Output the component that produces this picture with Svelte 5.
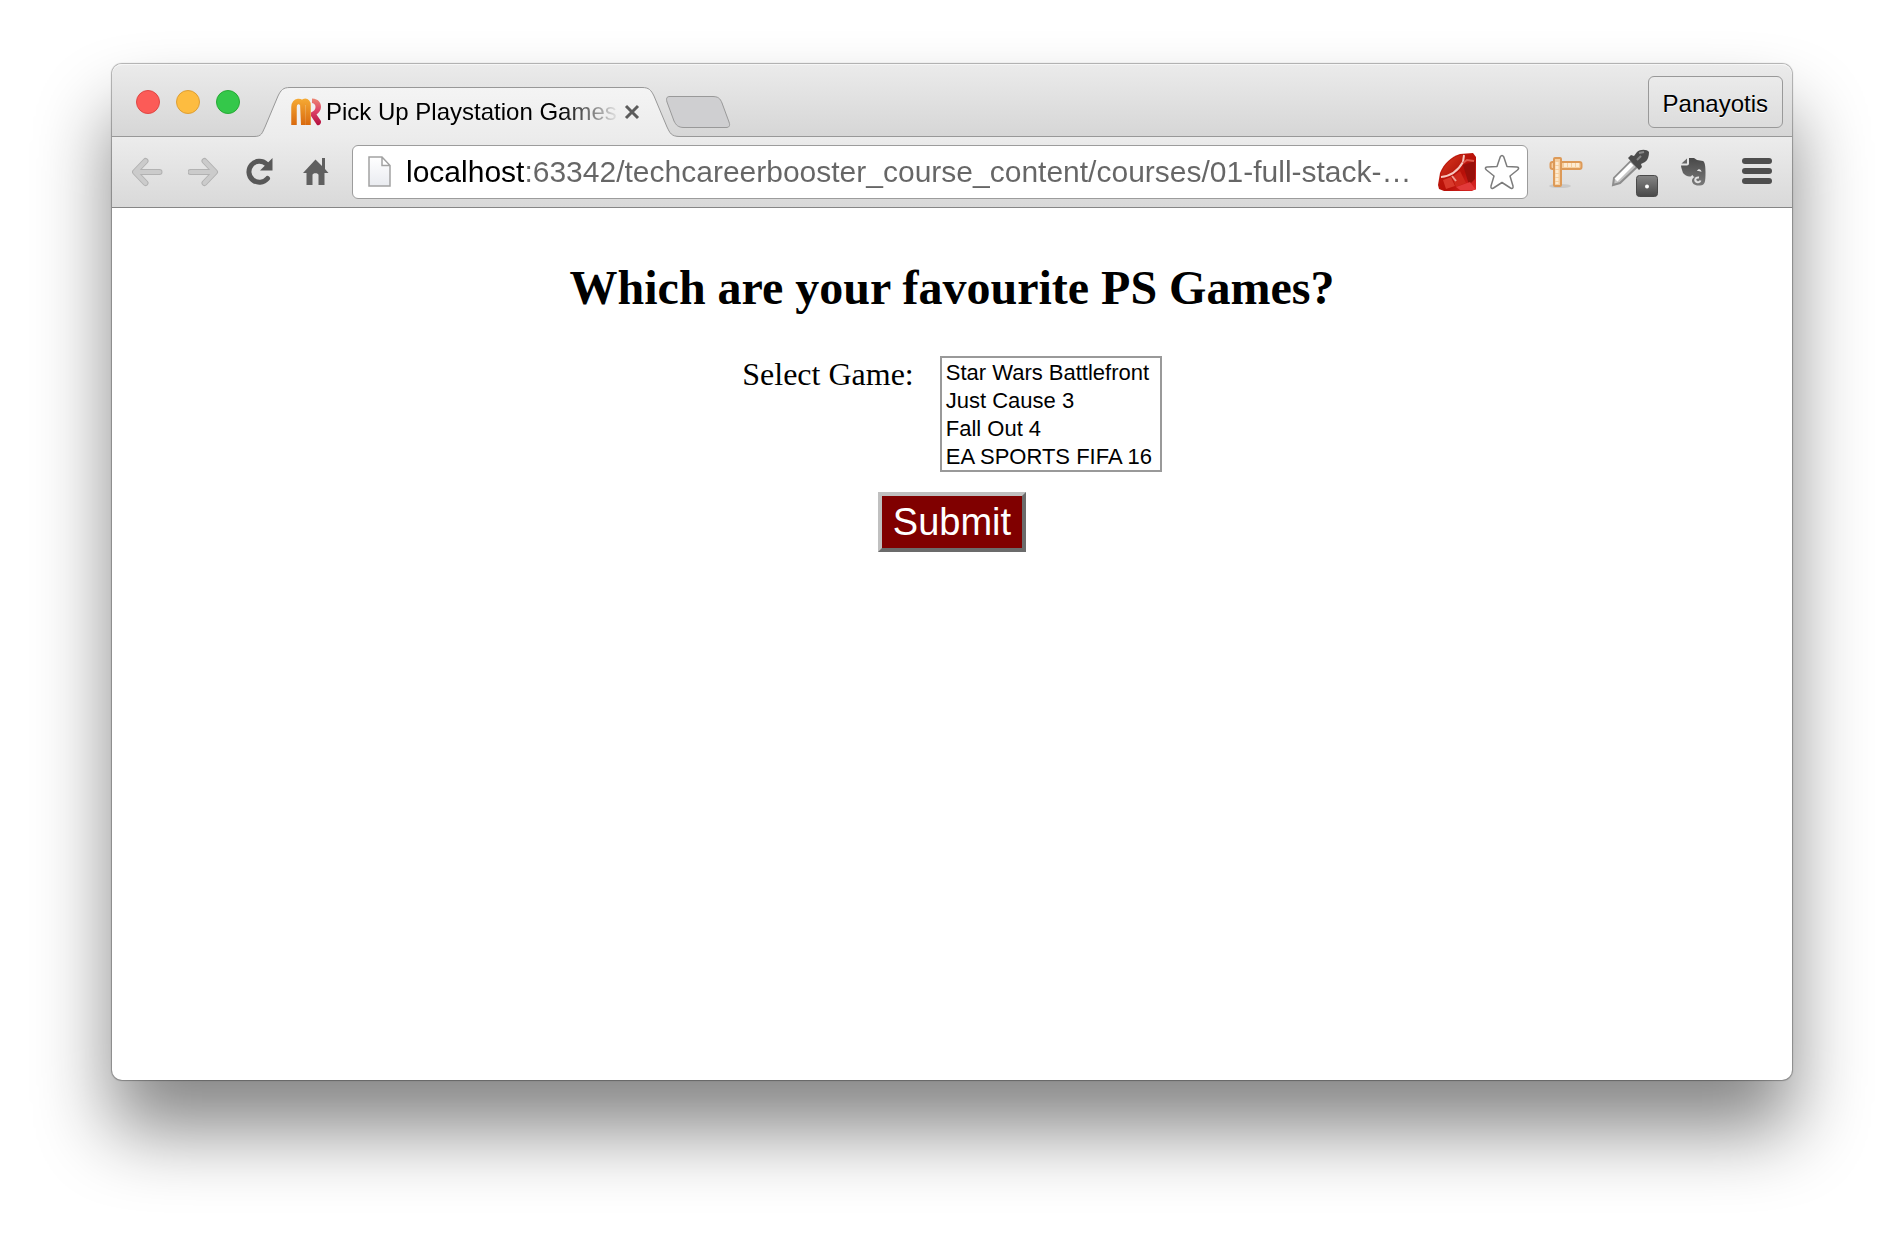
<script>
  const games = ['Star Wars Battlefront', 'Just Cause 3', 'Fall Out 4', 'EA SPORTS FIFA 16'];
  let url = $state('localhost:63342/techcareerbooster_course_content/courses/01-full-stack-…');
</script>

<div class="desktop">
  <div class="window">
    <header class="strip">
      <div class="lights">
        <button class="light red" aria-label="Close window"></button>
        <button class="light amber" aria-label="Minimise window"></button>
        <button class="light green" aria-label="Zoom window"></button>
      </div>

      <div class="tab">
        <svg class="tab-shape" viewBox="0 0 426 50" width="426" height="50" aria-hidden="true">
          <defs>
            <linearGradient id="tabFill" x1="0" y1="0" x2="0" y2="1">
              <stop offset="0" stop-color="#f4f4f4" />
              <stop offset="1" stop-color="#ececec" />
            </linearGradient>
          </defs>
          <path d="M0 49.5 C8 49.5 8 46 11 40 L24 9 C27 3 29 .5 36 .5 H388 C395 .5 397 3 400 9 L413 40 C416 46 417 49.5 426 49.5 V50 H0 Z" fill="url(#tabFill)" />
          <path d="M0 49.5 C8 49.5 8 46 11 40 L24 9 C27 3 29 .5 36 .5 H388 C395 .5 397 3 400 9 L413 40 C416 46 417 49.5 426 49.5" fill="none" stroke="#989898" />
        </svg>
        <div class="tab-body">
          <svg viewBox="0 0 32 30" width="32" height="30" aria-hidden="true">
            <defs>
              <linearGradient id="mFill" gradientUnits="userSpaceOnUse" x1="0" y1="1" x2="0" y2="28">
                <stop offset="0" stop-color="#f6ac35" />
                <stop offset="1" stop-color="#d9690e" />
              </linearGradient>
              <linearGradient id="rFill" gradientUnits="userSpaceOnUse" x1="0" y1="1" x2="0" y2="28">
                <stop offset="0" stop-color="#ee8a74" />
                <stop offset=".5" stop-color="#dc3f66" />
                <stop offset="1" stop-color="#b3103f" />
              </linearGradient>
            </defs>
            <path d="M4 28 V10 C4 3 12 3 12.500 8 C12.500 3 18 3 18 8 V28" fill="none" stroke="url(#mFill)" stroke-width="5.500" />
            <path d="M10 28 V10 C10 7 7 7 7 10 V28 Z" fill="#f0f0f0" />
            <path d="M10 6 L12.500 8 L15 6 L15.500 28 H11 Z" fill="url(#mFill)" />
            <path d="M22 1.500 C29 2 31 6 31 10 C31 13 29 16 26.500 17.500 L31 24 C31.500 27 29 29 27 28 L21 19 V15.500 C24.500 14 25.500 12 25.500 10 C25.500 8 24.500 6.500 22 6 Z" fill="url(#rFill)" />
          </svg>
          <span class="tab-title">Pick Up Playstation Games</span>
          <button class="plain" aria-label="Close tab">
            <svg viewBox="0 0 16 16" width="16" height="16" aria-hidden="true">
              <path d="M2 2 L14 14 M14 2 L2 14" stroke="#5c5c5c" stroke-width="3" />
            </svg>
          </button>
        </div>
      </div>

      <button class="plain new-tab" aria-label="New tab">
        <svg viewBox="0 0 66 34" width="66" height="34" aria-hidden="true">
          <path d="M5 1.500 H47 C53 1.500 55 3 57 8 L64 27 C65.500 31 64 32.500 61 32.500 H19 C13 32.500 11 30 9 26 L2 7 C1 3.500 1.500 1.500 5 1.500 Z" fill="#cfcfd1" stroke="#999" />
        </svg>
      </button>

      <button class="profile">Panayotis</button>
    </header>

    <nav class="toolbar" aria-label="Browser toolbar">
      <button class="plain" aria-label="Back">
        <svg viewBox="0 0 32 32" width="32" height="32" aria-hidden="true">
          <path d="M27.500 16 H5 M13.500 5 L3 16 L13.500 27" fill="none" stroke="#b2b2b2" stroke-width="6" stroke-linecap="round" stroke-linejoin="round" />
          <path d="M27.500 16 H5 M13.500 5 L3 16 L13.500 27" fill="none" stroke="#cbcbcb" stroke-width="4" stroke-linecap="round" stroke-linejoin="round" />
        </svg>
      </button>
      <button class="plain" aria-label="Forward">
        <svg viewBox="0 0 32 32" width="32" height="32" aria-hidden="true">
          <path d="M2.500 16 H26 M16.500 5 L27 16 L16.500 27" fill="none" stroke="#b2b2b2" stroke-width="6" stroke-linecap="round" stroke-linejoin="round" />
          <path d="M2.500 16 H26 M16.500 5 L27 16 L16.500 27" fill="none" stroke="#cbcbcb" stroke-width="4" stroke-linecap="round" stroke-linejoin="round" />
        </svg>
      </button>
      <button class="plain" aria-label="Reload">
        <svg viewBox="0 0 32 32" width="32" height="32" aria-hidden="true">
          <path d="M22.500 8 A10.500 10.500 0 1 0 23.500 22.500" fill="none" stroke="#585858" stroke-width="5" stroke-linecap="round" />
          <path d="M28.500 2 V14.500 H16 Z" fill="#585858" />
        </svg>
      </button>
      <button class="plain" aria-label="Home">
        <svg viewBox="0 0 32 32" width="32" height="32" aria-hidden="true">
          <path d="M15.500 3.500 L22 10 V2 H25 V13 L28.500 17 H24.500 V29 H18.500 V19 C18.500 16.500 12.500 16.500 12.500 19 V29 H6.500 V17 H3 Z" fill="#606060" />
        </svg>
      </button>

      <div class="omnibox">
        <svg viewBox="0 0 24 32" width="24" height="32" aria-hidden="true">
          <defs>
            <linearGradient id="pageFill" x1="0" y1="0" x2="0" y2="1">
              <stop offset="0" stop-color="#fff" />
              <stop offset="1" stop-color="#e9ebf0" />
            </linearGradient>
          </defs>
          <path d="M1 1 H14 L22 9.500 V30 H1 Z M14 1 V9.500 H22" fill="url(#pageFill)" stroke="#a2a2a2" stroke-width="1.500" />
        </svg>
        <input class="url" type="text" aria-label="Address" spellcheck="false" bind:value={url} />
        <button class="plain" aria-label="Ruby extension">
          <svg viewBox="0 0 38 38" width="38" height="38" aria-hidden="true">
            <defs>
              <linearGradient id="rubyFill" x1="0" y1="0" x2="1" y2="1">
                <stop offset="0" stop-color="#c2200f" />
                <stop offset=".6" stop-color="#b81008" />
                <stop offset="1" stop-color="#dc2a2a" />
              </linearGradient>
              <linearGradient id="rubyTop" x1="0" y1="0" x2="1" y2="1">
                <stop offset="0" stop-color="#dd3a22" />
                <stop offset="1" stop-color="#a80d04" />
              </linearGradient>
            </defs>
            <path d="M22 1 L35 0 L38 4 L38 36 L34 38 L6 38 L1 36 L0 32 L2 20 C6 10 13 4 22 1 Z" fill="url(#rubyFill)" />
            <path d="M3 21 C7 11 14 4 24 2 L25 8 C21 15 14 21 5 24 Z" fill="url(#rubyTop)" />
            <path d="M25 12 L37 8 V26 L31 32 Z" fill="#98100a" />
            <path d="M14 24 L22 18 L28 30 L18 34 Z" fill="#cf2a1c" />
            <path d="M5 27 L13 24 L17 33 L8 36 Z" fill="#d8392b" />
            <path d="M26 2 L25 9 C21 16 15 23 3 24" fill="none" stroke="#f7c9c0" stroke-width="2" />
            <path d="M25 10 L29 7 L36 8" fill="none" stroke="#dd5a4c" stroke-width="2" />
            <path d="M14 23 L18 28" stroke="#f0a095" stroke-width="2" />
            <path d="M18 34 L32 29 L38 37 H22 Z" fill="#e23a3a" />
          </svg>
        </button>
        <button class="plain" aria-label="Bookmark this page">
          <svg viewBox="0 0 36 36" width="36" height="36" aria-hidden="true">
            <path d="M16.200 3 Q18 0 19.800 3 L23 12.500 L33 13 Q36 13.500 33.500 16 L26 22 L29 32 Q29.500 35.500 26.500 34 L18 28.500 L9.500 34 Q6.500 35.500 7 32 L10 22 L2.500 16 Q0 13.500 3 13 L13 12.500 Z" fill="#fff" stroke="#7c7c7c" stroke-width="1.500" stroke-linejoin="round" />
          </svg>
        </button>
      </div>

      <div class="extensions">
        <button class="plain" aria-label="Page ruler">
          <svg viewBox="0 0 44 36" width="44" height="36" aria-hidden="true">
            <ellipse cx="13" cy="32" rx="11" ry="2" fill="#c9c9c9" />
            <rect x="3.500" y="8" width="31" height="7" rx="2" fill="#f6cf9f" stroke="#dd9a58" stroke-width="2" />
            <rect x="7" y="4" width="7" height="28" rx="1" fill="#f6cf9f" stroke="#dd9a58" stroke-width="2" />
            <path d="M17 11 H33" stroke="#fdebd2" stroke-width="4" stroke-dasharray="3 1" />
            <path d="M10 8 V30" stroke="#fdebd2" stroke-width="3" stroke-dasharray="3 1" />
          </svg>
        </button>
        <button class="plain" aria-label="Colour picker">
          <svg viewBox="0 0 48 50" width="48" height="50" aria-hidden="true">
            <defs>
              <linearGradient id="badgeFill" x1="0" y1="0" x2="0" y2="1">
                <stop offset="0" stop-color="#858585" />
                <stop offset="1" stop-color="#484848" />
              </linearGradient>
            </defs>
            <path d="M20 14 L26 20 L9 36 L2 38 L3 31 Z" fill="#c4c4c4" stroke="#8d8d8d" stroke-width="2" />
            <path d="M21 17 L5 33" stroke="#fff" stroke-width="4" />
            <path d="M17 11 L20 8 L23 9 L26 5 C29 2 36 2 38 5 C38 9 37 13 34 15 L30 17 L31 20 L28 23 Z" fill="#4c4c4c" />
            <path d="M28 6 L33 5 M26 13 L30 9" stroke="#888" stroke-width="2" />
            <rect x="25.500" y="28.500" width="21" height="21" rx="3" fill="url(#badgeFill)" stroke="#4a4a4a" />
            <circle cx="36" cy="39.500" r="2" fill="#fff" />
          </svg>
        </button>
        <button class="plain" aria-label="Web clipper">
          <svg viewBox="0 0 43 36" width="43" height="36" aria-hidden="true">
            <defs>
              <linearGradient id="clipFill" x1="0" y1="0" x2="0" y2="1">
                <stop offset="0" stop-color="#484848" />
                <stop offset="1" stop-color="#7a7a7a" />
              </linearGradient>
            </defs>
            <path d="M10 4 H15 L18 6 L24 7 C26 8 26.500 13 26.500 18 C26.500 28 26 31.500 21 31.500 C15 32 13 29 13 26.500 C13 25 14 23.500 16 23 C14 23 14 21 13 21 C12 24 6 22 4 19 C3 16 2 13 2 11.500 H8 Q10 11.500 10 9.500 Z" fill="url(#clipFill)" />
            <path d="M8 4.500 V9.500 H2.500 Z" fill="#666" />
            <path d="M18 17 C19 14.500 22 14.500 22.500 18 C21 17 20 17 18 17 Z" fill="#e8e8e8" />
            <path d="M20 23.500 C16 23 15 26.500 18 28 C20 28.500 21 28 21.500 26.500" fill="none" stroke="#e2e2e2" stroke-width="2" />
          </svg>
        </button>
        <button class="plain" aria-label="Menu">
          <svg viewBox="0 0 30 28" width="30" height="28" aria-hidden="true">
            <rect x="0" y="0" width="30" height="6" rx="3" fill="#4e4e4e" />
            <rect x="0" y="10" width="30" height="6" rx="3" fill="#4e4e4e" />
            <rect x="0" y="20" width="30" height="6" rx="3" fill="#4e4e4e" />
          </svg>
        </button>
      </div>
    </nav>

    <main class="page">
      <h1>Which are your favourite PS Games?</h1>
      <form onsubmit={(e) => e.preventDefault()}>
        <div class="field">
          <label for="game">Select Game:</label>
          <select id="game" multiple size="4">
            {#each games as game}
              <option>{game}</option>
            {/each}
          </select>
        </div>
        <button class="submit" type="submit">Submit</button>
      </form>
    </main>
  </div>
</div>

<style>
  :global(body) {
    margin: 0;
    background: #fff;
  }

  .desktop {
    box-sizing: border-box;
    min-height: 100vh;
    padding: 64px 112px 160px;
    display: flex;
    overflow: hidden;
  }

  .window {
    flex: 1;
    min-width: 0;
    display: flex;
    flex-direction: column;
    background: #fff;
    border-radius: 10px;
    box-shadow:
      0 0 1px 1px rgba(0, 0, 0, 0.3),
      0 50px 76px rgba(0, 0, 0, 0.48);
    font-family: "Liberation Sans", Arial, sans-serif;
  }

  button {
    font-family: "Liberation Sans", Arial, sans-serif;
    cursor: pointer;
  }

  .plain {
    display: flex;
    padding: 0;
    border: 0;
    background: none;
  }

  .strip {
    box-sizing: border-box;
    height: 73px;
    display: flex;
    align-items: flex-end;
    padding: 0 9px 0 24px;
    background: linear-gradient(#ebebeb, #d6d6d6);
    border-radius: 10px 10px 0 0;
    box-shadow:
      inset 0 1px #f6f6f6,
      inset 0 -1px #989898;
  }

  .lights {
    display: flex;
    gap: 16px;
    padding-bottom: 23px;
  }

  .light {
    box-sizing: border-box;
    width: 24px;
    height: 24px;
    padding: 0;
    border-radius: 50%;
    border: 1px solid;
  }

  .red {
    background: #fc5b57;
    border-color: #df4744;
  }

  .amber {
    background: #fdbc40;
    border-color: #de9f34;
  }

  .green {
    background: #34c84a;
    border-color: #27aa35;
  }

  .tab {
    display: grid;
    margin-left: 14px;
  }

  .tab-shape,
  .tab-body {
    grid-area: 1 / 1;
  }

  .tab-body {
    display: flex;
    align-items: center;
    padding: 0 40px 0 36px;
  }

  .tab-title {
    flex: 1;
    margin: 0 4px;
    white-space: nowrap;
    font-size: 24px;
    line-height: 28px;
    color: #000;
    mask-image: linear-gradient(to right, #000 80%, transparent);
  }

  .new-tab {
    margin: 0 auto 8px -15px;
  }

  .profile {
    box-sizing: border-box;
    height: 52px;
    margin-bottom: 9px;
    padding: 4px 14px 0;
    border: 1px solid #999;
    border-radius: 6px;
    background: linear-gradient(#ebebeb, #dcdcdc);
    color: #000;
    font-size: 24px;
    text-shadow: 0 1px #fff;
  }

  .toolbar {
    box-sizing: border-box;
    height: 71px;
    display: flex;
    align-items: center;
    gap: 24px;
    padding: 0 20px;
    background: linear-gradient(#ececec, #d9d9d9);
    border-bottom: 1px solid #868686;
  }

  .omnibox {
    box-sizing: border-box;
    flex: 1;
    min-width: 0;
    height: 54px;
    display: flex;
    align-items: center;
    gap: 8px;
    margin: 0 -5px 0 -4px;
    padding: 0 7px 0 15px;
    border: 1px solid #9c9c9c;
    border-radius: 6px;
    background: #fff;
  }

  .url {
    flex: 1;
    min-width: 0;
    height: 40px;
    margin-left: 6px;
    padding: 0;
    border: 0;
    outline: 0;
    font-family: inherit;
    font-size: 30px;
    color: transparent;
    background: linear-gradient(to right, #000 118px, #666 118px);
    background-clip: text;
  }

  .extensions {
    display: flex;
    align-items: center;
    gap: 20px;
  }

  .page {
    flex: 1;
    padding-top: 50px;
    display: flex;
    flex-direction: column;
    align-items: center;
    color: #000;
    font-family: "Liberation Serif", "Times New Roman", serif;
  }

  h1 {
    margin: 0;
    font-size: 48px;
    line-height: 60px;
    font-weight: 700;
  }

  form {
    display: flex;
    flex-direction: column;
    align-items: center;
    gap: 20px;
    margin-top: 38px;
  }

  .field {
    display: flex;
    align-items: flex-start;
    gap: 26px;
  }

  label {
    font-size: 32px;
    line-height: 36px;
  }

  select {
    box-sizing: border-box;
    width: 222px;
    height: 116px;
    padding: 0;
    border: 2px solid #999;
    border-radius: 0;
    overflow: hidden;
    background: #fff;
    color: #000;
    font-family: "Liberation Sans", Arial, sans-serif;
    font-size: 22px;
  }

  option {
    box-sizing: border-box;
    height: 28px;
    min-height: 0;
    padding: 2px 4px 0;
    line-height: 26px;
  }

  .submit {
    padding: 4px 11px;
    border: 4px solid;
    border-color: #c0c0c0 #6b6b6b #6b6b6b #c0c0c0;
    border-radius: 0;
    background: #800000;
    color: #fff;
    font-size: 38px;
    line-height: 44px;
  }
</style>
